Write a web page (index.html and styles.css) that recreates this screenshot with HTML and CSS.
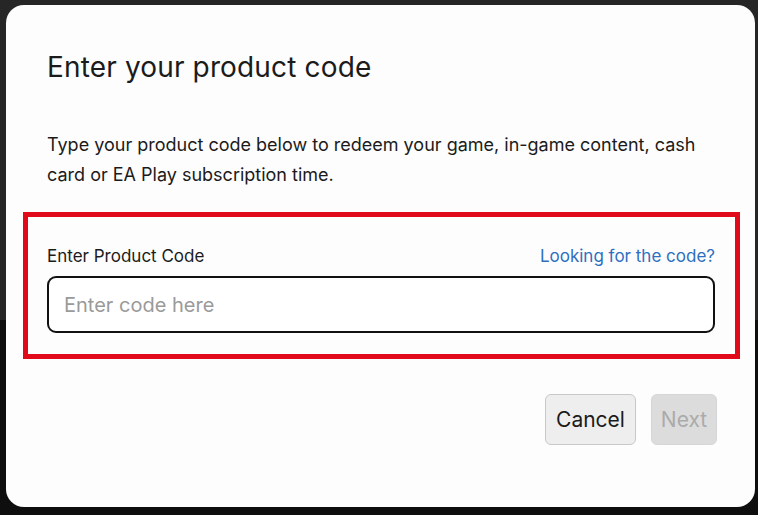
FILE: index.html
```html
<!DOCTYPE html>
<html lang="en">
<head>
<meta charset="utf-8">
<title>Enter your product code</title>
<link rel="stylesheet" href="styles.css">
</head>
<body>
<div class="backdrop">
  <div class="dialog">
    <h1 class="title">Enter your product code</h1>
    <p class="desc">Type your product code below to redeem your game, in-game content, cash card or EA Play subscription time.</p>
    <div class="highlight">
      <div class="field-head">
        <label class="label" for="code">Enter Product Code</label>
        <a class="link" href="#">Looking for the code?</a>
      </div>
      <input id="code" class="input" type="text" placeholder="Enter code here">
    </div>
    <div class="actions">
      <button class="btn btn-cancel">Cancel</button>
      <button class="btn btn-next" disabled>Next</button>
    </div>
  </div>
</div>
</body>
</html>
```
FILE: styles.css
```css
html, body {
  margin: 0;
  padding: 0;
}
body {
  width: 758px;
  height: 515px;
  overflow: hidden;
  background: linear-gradient(to bottom, #262626 0, #262626 320px, #0e0e0e 320px, #0e0e0e 100%);
  font-family: "Inter", "Lato", sans-serif;
}
.backdrop {
  padding: 5px 3px 8px 6px;
}
.dialog {
  box-sizing: border-box;
  height: 502px;
  background: #fdfdfd;
  border-radius: 18px;
  padding: 44px 0 0 0;
  color: #1b1b1b;
}
.title {
  margin: 0 0 0 41px;
  font-size: 28px;
  letter-spacing: 0.15px;
  font-weight: 400;
  line-height: 36px;
}
.desc {
  margin: 45px 0 0 41px;
  width: 665px;
  font-size: 18px;
  line-height: 30px;
}
.highlight {
  margin: 22px 0 0 17px;
  width: 717px;
  box-sizing: border-box;
  border: 5px solid #e10a1b;
  padding: 29px 20px 21px 19px;
}
.field-head {
  display: flex;
  justify-content: space-between;
  align-items: baseline;
  margin-bottom: 10px;
}
.label {
  font-size: 17px;
  line-height: 20px;
}
.link {
  font-size: 17px;
  line-height: 20px;
  color: #2e6fbf;
  text-decoration: none;
}
.input {
  display: block;
  box-sizing: border-box;
  width: 668px;
  height: 57px;
  border: 2px solid #111;
  border-radius: 9px;
  padding: 0 15px;
  font-family: inherit;
  font-size: 20px;
  background: #fff;
  outline: none;
}
.input::placeholder {
  color: #9a9a9a;
}
.actions {
  display: flex;
  justify-content: flex-end;
  gap: 15px;
  margin: 35px 38px 0 0;
}
.btn {
  height: 51px;
  border-radius: 6px;
  font-family: inherit;
  font-size: 21px;
  padding: 0 6px;
}
.btn-cancel {
  width: 91px;
  background: #eeeeee;
  border: 1px solid #c8c8c8;
  color: #1b1b1b;
}
.btn-next {
  width: 66px;
  background: #dcdcdc;
  border: 1px solid #d6d6d6;
  color: #ababab;
}
```
